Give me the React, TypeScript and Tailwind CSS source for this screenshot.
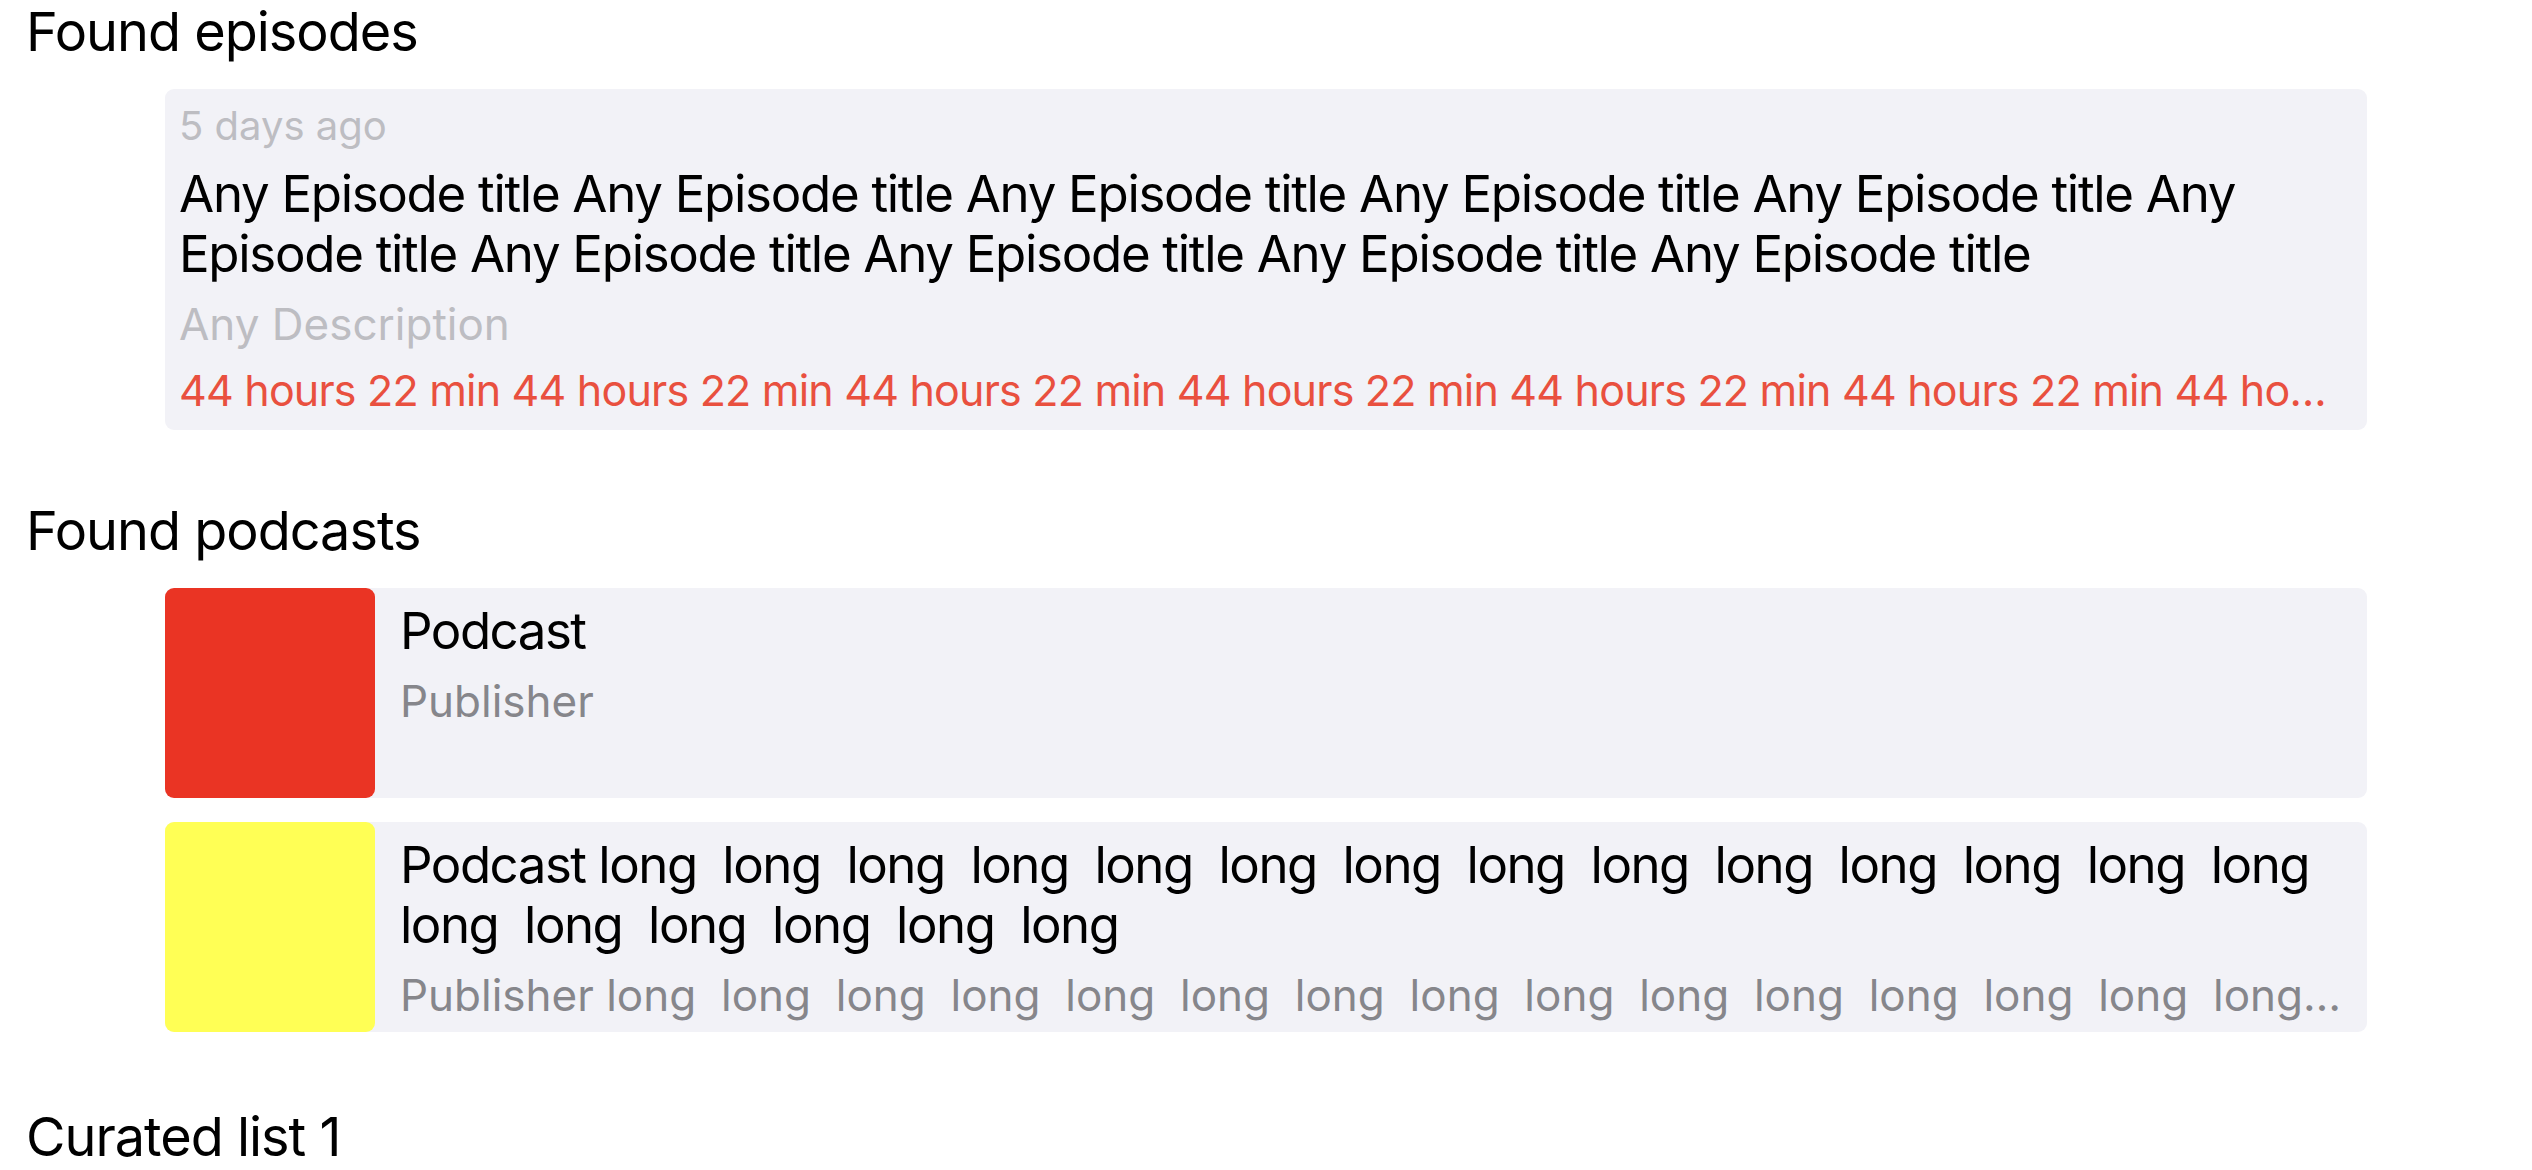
import React from 'react';

// Search results: found episodes, found podcasts, curated lists

interface Episode {
  id: string;
  published: string;
  title: string;
  description: string;
  duration: string;
}

interface Podcast {
  id: string;
  title: string;
  publisher: string;
  artwork: string;
}

const EPISODES: Episode[] = [
  {
    id: 'ep-1',
    published: '5 days ago',
    title: 'Any Episode title '.repeat(10).trim(),
    description: 'Any Description',
    duration: '44 hours 22 min '.repeat(10).trim(),
  },
];

const PODCASTS: Podcast[] = [
  { id: 'pod-1', title: 'Podcast', publisher: 'Publisher', artwork: 'bg-[#ea3424]' },
  {
    id: 'pod-2',
    title: 'Podcast' + ' long '.repeat(20),
    publisher: 'Publisher' + ' long '.repeat(30),
    artwork: 'bg-[#ffff55]',
  },
];

function SectionHeader({ title }: { title: string }) {
  return (
    <h2 className="px-[26px] text-[54px] leading-[64px] font-normal tracking-[-1px] text-black">{title}</h2>
  );
}

function EpisodeRow({ episode }: { episode: Episode }) {
  return (
    <article className="rounded-[9px] bg-[#f2f2f7] px-[14px] pt-[13px] pb-[14px]">
      <p className="text-[40px] leading-[48px] text-[#bdbdc2]">{episode.published}</p>
      <h3 className="mt-[14px] text-[51px] leading-[60px] tracking-[-1.3px] text-black">{episode.title}</h3>
      <p className="mt-[14px] text-[44px] leading-[52px] text-[#bdbdc2]">{episode.description}</p>
      <p className="mt-[14px] mr-[22px] truncate text-[43px] leading-[52px] tracking-[-0.8px] text-[#e9503f]">
        {episode.duration}
      </p>
    </article>
  );
}

function PodcastRow({ podcast }: { podcast: Podcast }) {
  return (
    <article className="flex h-[210px] rounded-[9px] bg-[#f2f2f7]">
      <div className={`h-[210px] w-[210px] shrink-0 rounded-[9px] ${podcast.artwork}`} aria-hidden="true" />
      <div className="min-w-0 flex-1 pt-[13px] pr-[14px] pl-[25px]">
        <h3 className="line-clamp-2 whitespace-pre-wrap text-[51px] leading-[60px] tracking-[-1.5px] text-black">
          {podcast.title}
        </h3>
        <p className="mt-[14px] overflow-hidden text-ellipsis whitespace-pre text-[44px] leading-[52px] text-[#86868b]">
          {podcast.publisher}
        </p>
      </div>
    </article>
  );
}

export default function App() {
  return (
    <div className="min-h-screen bg-white font-['Inter',sans-serif] text-black">
      {/* Found episodes */}
      <section>
        <SectionHeader title="Found episodes" />
        <div className="mt-[25px] flex flex-col gap-[24px] px-[165px]">
          {EPISODES.map((ep) => (
            <EpisodeRow key={ep.id} episode={ep} />
          ))}
        </div>
      </section>

      {/* Found podcasts */}
      <section className="mt-[69px]">
        <SectionHeader title="Found podcasts" />
        <div className="mt-[25px] flex flex-col gap-[24px] px-[165px]">
          {PODCASTS.map((p) => (
            <PodcastRow key={p.id} podcast={p} />
          ))}
        </div>
      </section>

      {/* Curated lists */}
      <section className="mt-[73px]">
        <SectionHeader title="Curated list 1" />
      </section>
    </div>
  );
}
